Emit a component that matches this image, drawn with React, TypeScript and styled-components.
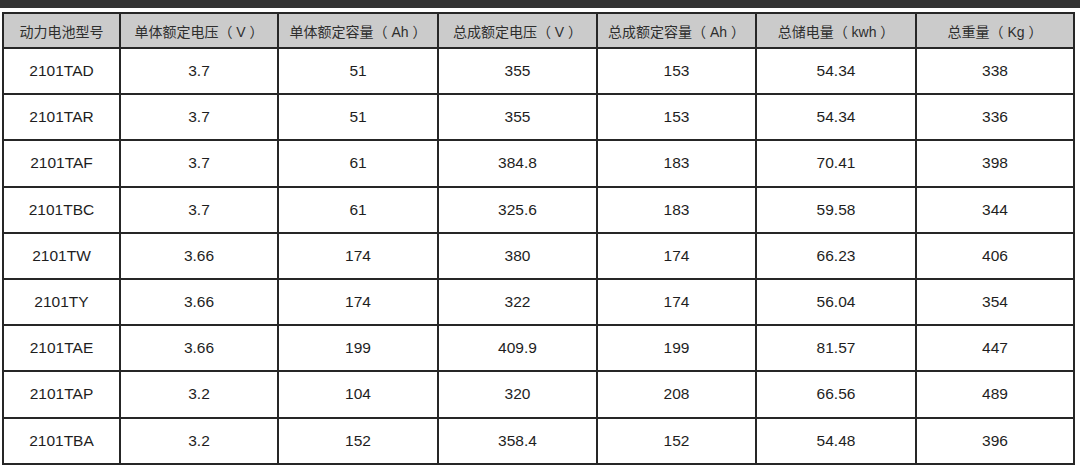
import React, { ReactElement } from "react";
import styled, { createGlobalStyle } from "styled-components";

/**
 * Data
 */

interface IBattery {
  model: string;
  cell_voltage: string;
  cell_capacity: string;
  pack_voltage: string;
  pack_capacity: string;
  energy: string;
  weight: string;
}

const headers = [
  "动力电池型号",
  "单体额定电压（ V ）",
  "单体额定容量（ Ah ）",
  "总成额定电压（ V ）",
  "总成额定容量（ Ah ）",
  "总储电量（ kwh ）",
  "总重量（ Kg ）",
];

const column_widths = [117, 158, 160, 159, 159, 160, 158];

const batteries: IBattery[] = [
  { model: "2101TAD", cell_voltage: "3.7", cell_capacity: "51", pack_voltage: "355", pack_capacity: "153", energy: "54.34", weight: "338" },
  { model: "2101TAR", cell_voltage: "3.7", cell_capacity: "51", pack_voltage: "355", pack_capacity: "153", energy: "54.34", weight: "336" },
  { model: "2101TAF", cell_voltage: "3.7", cell_capacity: "61", pack_voltage: "384.8", pack_capacity: "183", energy: "70.41", weight: "398" },
  { model: "2101TBC", cell_voltage: "3.7", cell_capacity: "61", pack_voltage: "325.6", pack_capacity: "183", energy: "59.58", weight: "344" },
  { model: "2101TW", cell_voltage: "3.66", cell_capacity: "174", pack_voltage: "380", pack_capacity: "174", energy: "66.23", weight: "406" },
  { model: "2101TY", cell_voltage: "3.66", cell_capacity: "174", pack_voltage: "322", pack_capacity: "174", energy: "56.04", weight: "354" },
  { model: "2101TAE", cell_voltage: "3.66", cell_capacity: "199", pack_voltage: "409.9", pack_capacity: "199", energy: "81.57", weight: "447" },
  { model: "2101TAP", cell_voltage: "3.2", cell_capacity: "104", pack_voltage: "320", pack_capacity: "208", energy: "66.56", weight: "489" },
  { model: "2101TBA", cell_voltage: "3.2", cell_capacity: "152", pack_voltage: "358.4", pack_capacity: "152", energy: "54.48", weight: "396" },
];

/**
 * Styles
 */

const GlobalStyle = createGlobalStyle`
  html, body {
    margin: 0;
    padding: 0;
    background: #ffffff;
    font-family: "Liberation Sans", Arial, "Noto Sans CJK SC", sans-serif;
  }
`;

const Page = styled.div`
  width: 1080px;
  height: 469px;
  overflow: hidden;
  background: #ffffff;
`;

const TopBar = styled.div`
  height: 8px;
  background-color: #333333;
`;

const TableWrapper = styled.div`
  padding: 4px 0 0 2px;
`;

const Table = styled.table`
  border-collapse: collapse;
  table-layout: fixed;
  width: 1073px;
`;

const HeaderRow = styled.tr`
  height: 35px;
  background-color: #cbcbcb;
`;

const BodyRow = styled.tr`
  height: 46.2px;
`;

const HeaderCell = styled.th`
  border: 2px solid #262626;
  padding: 0;
  font-weight: 400;
  font-size: 14px;
  color: #2e2e2e;
  text-align: center;
  vertical-align: middle;
  white-space: pre;
  font-family: "Liberation Sans", "Noto Sans CJK SC", sans-serif;
`;

const Cell = styled.td`
  border: 2px solid #262626;
  padding: 0;
  font-size: 15.5px;
  color: #1e1e1e;
  text-align: center;
  vertical-align: middle;
`;

export default function App(): ReactElement {
  /**
   * Render
   */
  return (
    <>
      <GlobalStyle />
      <Page>
        <TopBar />
        <TableWrapper>
          <Table>
            <colgroup>
              {column_widths.map((w, i) => (
                <col key={i} style={{ width: w }} />
              ))}
            </colgroup>
            <thead>
              <HeaderRow>
                {headers.map((h) => (
                  <HeaderCell key={h}>{h}</HeaderCell>
                ))}
              </HeaderRow>
            </thead>
            <tbody>
              {batteries.map((b) => (
                <BodyRow key={b.model}>
                  <Cell>{b.model}</Cell>
                  <Cell>{b.cell_voltage}</Cell>
                  <Cell>{b.cell_capacity}</Cell>
                  <Cell>{b.pack_voltage}</Cell>
                  <Cell>{b.pack_capacity}</Cell>
                  <Cell>{b.energy}</Cell>
                  <Cell>{b.weight}</Cell>
                </BodyRow>
              ))}
            </tbody>
          </Table>
        </TableWrapper>
      </Page>
    </>
  );
}
